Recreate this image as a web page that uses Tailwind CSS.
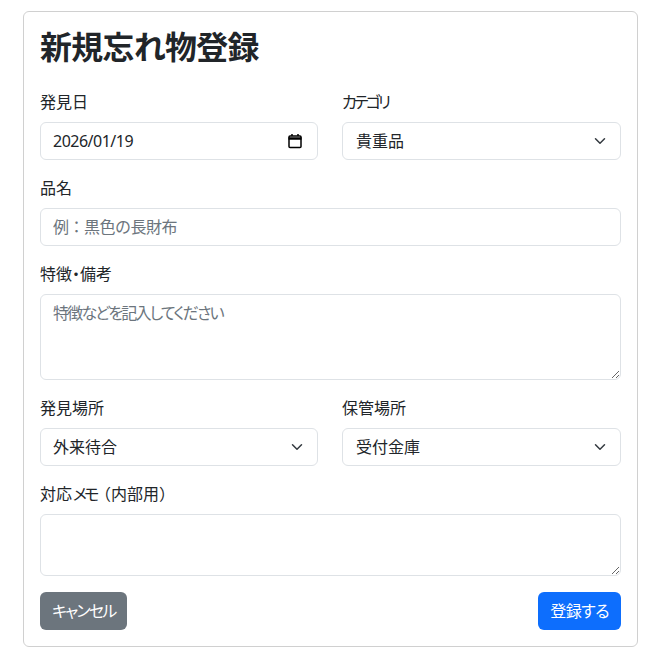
<!DOCTYPE html>
<html lang="ja">
  <head>
    <meta charset="utf-8" />
    <meta name="viewport" content="width=device-width, initial-scale=1.0" />
    <title>新規忘れ物登録</title>
    <script src="https://cdn.jsdelivr.net/npm/@tailwindcss/browser@4"></script>
  </head>

  <body class="bg-white text-[#212529] text-base font-['Noto_Sans','Noto_Sans_CJK_JP',sans-serif] [font-feature-settings:'palt']">
    <div class="pt-[11px] pl-[23px] pr-[20px]">
      <form class="border border-[#d0d0d0] rounded-md p-4 h-[636px]">
        <h1 class="text-[31.87px] leading-[38px] font-semibold tracking-[-0.6px] mb-6">新規忘れ物登録</h1>

        <!-- 発見日 / カテゴリ -->
        <div class="grid grid-cols-[278px_1fr] gap-x-6 mb-4">
          <div>
            <label class="block leading-6 mb-2">発見日</label>
            <div class="relative">
              <input type="text" value="2026/01/19" class="block w-full h-[38px] px-3 bg-white border border-[#dee2e6] rounded-md tracking-[-0.5px]" />
              <svg class="absolute right-[15px] top-[11px] w-4 h-4 pointer-events-none" viewBox="0 0 16 16" fill="none" stroke="#000" stroke-width="1.5"><rect x="2" y="3" width="12" height="11.5" rx="1" /><path d="M1.5 5.5h13" stroke-width="2.5" /><path d="M5 1v2M11 1v2" /></svg>
            </div>
          </div>
          <div>
            <label class="block leading-6 mb-2 tracking-[-2.8px]">カテゴリ</label>
            <div class="relative">
              <select class="block w-full h-[38px] pl-[13px] pr-9 bg-white border border-[#dee2e6] rounded-md appearance-none">
                <option>貴重品</option>
              </select>
              <svg class="absolute right-[15px] top-[13px] w-3 h-3 pointer-events-none" viewBox="0 0 16 16" fill="none" stroke="#343a40" stroke-width="2" stroke-linecap="round" stroke-linejoin="round"><path d="m2 5 6 6 6-6" /></svg>
            </div>
          </div>
        </div>

        <div class="mb-4">
          <label class="block leading-6 mb-2">品名</label>
          <input type="text" placeholder="例：黒色の長財布" class="block w-full h-[38px] px-3 border border-[#dee2e6] rounded-md placeholder:text-[#6c757d] [font-feature-settings:normal] tracking-[-0.5px]" />
        </div>

        <div class="mb-4">
          <label class="block leading-6 mb-2">特徴・備考</label>
          <textarea placeholder="特徴などを記入してください" class="block w-full h-[86px] px-3 py-1.5 border border-[#dee2e6] rounded-md placeholder:text-[#6c757d] tracking-[-1.8px]"></textarea>
        </div>

        <!-- 発見場所 / 保管場所 -->
        <div class="grid grid-cols-[278px_1fr] gap-x-6 mb-4">
          <div>
            <label class="block leading-6 mb-2">発見場所</label>
            <div class="relative">
              <select class="block w-full h-[38px] pl-3 pr-9 bg-white border border-[#dee2e6] rounded-md appearance-none">
                <option>外来待合</option>
              </select>
              <svg class="absolute right-[15px] top-[13px] w-3 h-3 pointer-events-none" viewBox="0 0 16 16" fill="none" stroke="#343a40" stroke-width="2" stroke-linecap="round" stroke-linejoin="round"><path d="m2 5 6 6 6-6" /></svg>
            </div>
          </div>
          <div>
            <label class="block leading-6 mb-2">保管場所</label>
            <div class="relative">
              <select class="block w-full h-[38px] pl-[13px] pr-9 bg-white border border-[#dee2e6] rounded-md appearance-none">
                <option>受付金庫</option>
              </select>
              <svg class="absolute right-[15px] top-[13px] w-3 h-3 pointer-events-none" viewBox="0 0 16 16" fill="none" stroke="#343a40" stroke-width="2" stroke-linecap="round" stroke-linejoin="round"><path d="m2 5 6 6 6-6" /></svg>
            </div>
          </div>
        </div>

        <div class="mb-4">
          <label class="block leading-6 mb-2 [font-feature-settings:normal]">対応<span class="tracking-[-4.5px]">メモ</span>（内部用）</label>
          <textarea class="block w-full h-[62px] px-3 py-1.5 border border-[#dee2e6] rounded-md"></textarea>
        </div>

        <div class="flex justify-between">
          <button type="button" class="h-[38px] px-3 bg-[#6c757d] text-white rounded-md tracking-[-1.8px]">キャンセル</button>
          <button type="submit" class="h-[38px] px-3 bg-[#0d6efd] text-white rounded-md tracking-[-0.5px]">登録する</button>
        </div>
      </form>
    </div>
  </body>
</html>
